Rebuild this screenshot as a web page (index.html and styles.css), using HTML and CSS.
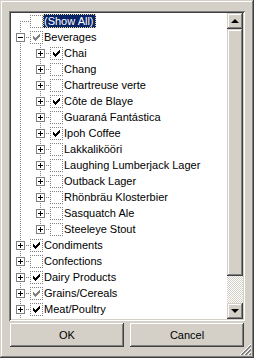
FILE: index.html
```html
<!DOCTYPE html>
<html lang="en">
<head>
<meta charset="UTF-8" />
<title>Filter</title>
<link rel="stylesheet" href="styles.css">
</head>
<body>

<div class="popup">
  <div class="tree-box">
    <div class="tree">
      <div class="row">
        <span class="cell first"></span>
        <span class="cb"></span>
        <span class="label selected">(Show All)</span>
      </div>
      <div class="row">
        <span class="cell tee"><span class="exp minus"></span></span>
        <span class="cb part"><svg viewBox="1 1 11 11"><path d="M9 3h1v1h-1zM8 4h2v1h-2zM3 5h1v1h-1zM7 5h3v1h-3zM3 6h2v1h-2zM6 6h3v1h-3zM3 7h5v1h-5zM4 8h3v1h-3zM5 9h1v1h-1z"/></svg></span>
        <span class="label">Beverages</span>
      </div>
      <div class="row">
        <span class="cell line"></span>
        <span class="cell tee"><span class="exp"></span></span>
        <span class="cb"><svg viewBox="1 1 11 11"><path d="M9 3h1v1h-1zM8 4h2v1h-2zM3 5h1v1h-1zM7 5h3v1h-3zM3 6h2v1h-2zM6 6h3v1h-3zM3 7h5v1h-5zM4 8h3v1h-3zM5 9h1v1h-1z"/></svg></span>
        <span class="label">Chai</span>
      </div>
      <div class="row">
        <span class="cell line"></span>
        <span class="cell tee"><span class="exp"></span></span>
        <span class="cb"></span>
        <span class="label">Chang</span>
      </div>
      <div class="row">
        <span class="cell line"></span>
        <span class="cell tee"><span class="exp"></span></span>
        <span class="cb"></span>
        <span class="label">Chartreuse verte</span>
      </div>
      <div class="row">
        <span class="cell line"></span>
        <span class="cell tee"><span class="exp"></span></span>
        <span class="cb"><svg viewBox="1 1 11 11"><path d="M9 3h1v1h-1zM8 4h2v1h-2zM3 5h1v1h-1zM7 5h3v1h-3zM3 6h2v1h-2zM6 6h3v1h-3zM3 7h5v1h-5zM4 8h3v1h-3zM5 9h1v1h-1z"/></svg></span>
        <span class="label">Côte de Blaye</span>
      </div>
      <div class="row">
        <span class="cell line"></span>
        <span class="cell tee"><span class="exp"></span></span>
        <span class="cb"></span>
        <span class="label">Guaraná Fantástica</span>
      </div>
      <div class="row">
        <span class="cell line"></span>
        <span class="cell tee"><span class="exp"></span></span>
        <span class="cb"><svg viewBox="1 1 11 11"><path d="M9 3h1v1h-1zM8 4h2v1h-2zM3 5h1v1h-1zM7 5h3v1h-3zM3 6h2v1h-2zM6 6h3v1h-3zM3 7h5v1h-5zM4 8h3v1h-3zM5 9h1v1h-1z"/></svg></span>
        <span class="label">Ipoh Coffee</span>
      </div>
      <div class="row">
        <span class="cell line"></span>
        <span class="cell tee"><span class="exp"></span></span>
        <span class="cb"></span>
        <span class="label">Lakkalikööri</span>
      </div>
      <div class="row">
        <span class="cell line"></span>
        <span class="cell tee"><span class="exp"></span></span>
        <span class="cb"></span>
        <span class="label">Laughing Lumberjack Lager</span>
      </div>
      <div class="row">
        <span class="cell line"></span>
        <span class="cell tee"><span class="exp"></span></span>
        <span class="cb"></span>
        <span class="label">Outback Lager</span>
      </div>
      <div class="row">
        <span class="cell line"></span>
        <span class="cell tee"><span class="exp"></span></span>
        <span class="cb"></span>
        <span class="label">Rhönbräu Klosterbier</span>
      </div>
      <div class="row">
        <span class="cell line"></span>
        <span class="cell tee"><span class="exp"></span></span>
        <span class="cb"></span>
        <span class="label">Sasquatch Ale</span>
      </div>
      <div class="row">
        <span class="cell line"></span>
        <span class="cell last"><span class="exp"></span></span>
        <span class="cb"></span>
        <span class="label">Steeleye Stout</span>
      </div>
      <div class="row">
        <span class="cell tee"><span class="exp"></span></span>
        <span class="cb"><svg viewBox="1 1 11 11"><path d="M9 3h1v1h-1zM8 4h2v1h-2zM3 5h1v1h-1zM7 5h3v1h-3zM3 6h2v1h-2zM6 6h3v1h-3zM3 7h5v1h-5zM4 8h3v1h-3zM5 9h1v1h-1z"/></svg></span>
        <span class="label">Condiments</span>
      </div>
      <div class="row">
        <span class="cell tee"><span class="exp"></span></span>
        <span class="cb"></span>
        <span class="label">Confections</span>
      </div>
      <div class="row">
        <span class="cell tee"><span class="exp"></span></span>
        <span class="cb"><svg viewBox="1 1 11 11"><path d="M9 3h1v1h-1zM8 4h2v1h-2zM3 5h1v1h-1zM7 5h3v1h-3zM3 6h2v1h-2zM6 6h3v1h-3zM3 7h5v1h-5zM4 8h3v1h-3zM5 9h1v1h-1z"/></svg></span>
        <span class="label">Dairy Products</span>
      </div>
      <div class="row">
        <span class="cell tee"><span class="exp"></span></span>
        <span class="cb part"><svg viewBox="1 1 11 11"><path d="M9 3h1v1h-1zM8 4h2v1h-2zM3 5h1v1h-1zM7 5h3v1h-3zM3 6h2v1h-2zM6 6h3v1h-3zM3 7h5v1h-5zM4 8h3v1h-3zM5 9h1v1h-1z"/></svg></span>
        <span class="label">Grains/Cereals</span>
      </div>
      <div class="row">
        <span class="cell tee"><span class="exp"></span></span>
        <span class="cb"><svg viewBox="1 1 11 11"><path d="M9 3h1v1h-1zM8 4h2v1h-2zM3 5h1v1h-1zM7 5h3v1h-3zM3 6h2v1h-2zM6 6h3v1h-3zM3 7h5v1h-5zM4 8h3v1h-3zM5 9h1v1h-1z"/></svg></span>
        <span class="label">Meat/Poultry</span>
      </div>
      <div class="row">
        <span class="cell line"></span>
      </div>
    </div>

    <div class="scrollbar">
      <div class="sb-btn"><span class="arrow up"></span></div>
      <div class="sb-track">
        <div class="sb-thumb"></div>
      </div>
      <div class="sb-btn"><span class="arrow down"></span></div>
    </div>
  </div>

  <div class="buttons">
    <button class="btn">OK</button>
    <button class="btn">Cancel</button>
  </div>

  <svg class="grip" width="12" height="12" viewBox="0 0 12 12">
    <path d="M11 0L0 11M11 4L4 11M11 8L8 11" stroke="#fff" stroke-width="1" shape-rendering="crispEdges"/>
    <path d="M11 1L1 11M11 2L2 11M11 5L5 11M11 6L6 11M11 9L9 11M11 10L10 11" stroke="#808080" stroke-width="1" shape-rendering="crispEdges"/>
  </svg>
</div>

</body>
</html>
```

FILE: styles.css
```css
body {
  margin: 0;
  background: #d4d0c8;
  font-family: 'Liberation Sans', Arial, sans-serif;
  font-size: 11px;
  color: #000;
}
.popup {
  position: relative;
  width: 254px;
  height: 358px;
  box-sizing: border-box;
  padding: 11px 9px 0 9px;
  background: #d4d0c8;
  box-shadow: inset -1px -1px #404040, inset 1px 1px #d4d0c8, inset -2px -2px #808080, inset 2px 2px #fff;
}
/* Tree */
.tree-box {
  display: flex;
  width: 236px;
  height: 310px;
  box-sizing: border-box;
  padding: 2px;
  background: #fff;
  box-shadow: inset 1px 1px #808080, inset -1px -1px #fff, inset 2px 2px #404040, inset -2px -2px #d4d0c8;
}
.tree {
  flex: 1;
  overflow: hidden;
  background: #fff;
}
.row {
  display: flex;
  align-items: flex-start;
  height: 16px;
  white-space: nowrap;
}
.cell {
  position: relative;
  flex: none;
  width: 20px;
  height: 16px;
}
.cell::before,
.cell::after {
  content: "";
  position: absolute;
}
/* vertical dotted line */
.cell.line::before,
.cell.tee::before,
.cell.first::before,
.cell.last::before {
  left: 9px;
  top: 0;
  width: 1px;
  height: 16px;
  background: repeating-linear-gradient(to bottom, #808080 0 1px, transparent 1px 2px);
}
.cell.first::before {
  top: 8px;
  height: 8px;
}
.cell.last::before {
  height: 9px;
}
/* horizontal dotted line */
.cell.tee::after,
.cell.first::after,
.cell.last::after {
  left: 9px;
  top: 8px;
  width: 11px;
  height: 1px;
  background: repeating-linear-gradient(to right, #808080 0 1px, transparent 1px 2px);
}
.exp {
  position: absolute;
  left: 5px;
  top: 4px;
  width: 9px;
  height: 9px;
  box-sizing: border-box;
  border: 1px solid #808080;
  background: #fff;
  z-index: 1;
}
.exp::before,
.exp::after {
  content: "";
  position: absolute;
  background: #000;
}
.exp::before {
  left: 1px;
  top: 3px;
  width: 5px;
  height: 1px;
}
.exp::after {
  left: 3px;
  top: 1px;
  width: 1px;
  height: 5px;
}
.exp.minus::after {
  display: none;
}
.cb {
  flex: none;
  width: 13px;
  height: 13px;
  box-sizing: border-box;
  margin: 2px 0 0 -1px;
  border: 1px dotted #808080;
  background: #fff;
}
.cb svg {
  display: block;
  width: 11px;
  height: 11px;
  fill: #000;
  shape-rendering: crispEdges;
}
.cb.part svg {
  fill: #808080;
}
.label {
  margin-top: 1px;
  padding: 0 2px 0 1px;
  line-height: 14px;
}
.label.selected {
  background: #0a246a;
  color: #fff;
  outline: 1px dotted #f0d890;
  outline-offset: -1px;
}
/* Scrollbar */
.scrollbar {
  display: flex;
  flex-direction: column;
  width: 16px;
  flex: none;
}
.sb-btn {
  display: flex;
  align-items: center;
  justify-content: center;
  height: 16px;
  flex: none;
  background: #d4d0c8;
  box-shadow: inset -1px -1px #404040, inset 1px 1px #d4d0c8, inset -2px -2px #808080, inset 2px 2px #fff;
}
.arrow {
  width: 0;
  height: 0;
  border-left: 4px solid transparent;
  border-right: 4px solid transparent;
}
.arrow.up {
  border-bottom: 4px solid #000;
  margin-top: -1px;
}
.arrow.down {
  border-top: 4px solid #000;
}
.sb-track {
  flex: 1;
  background-color: #d4d0c8;
  background-image: conic-gradient(#fff 25%, #d4d0c8 0 50%, #fff 0 75%, #d4d0c8 0);
  background-size: 2px 2px;
}
.sb-thumb {
  height: 247px;
  background: #d4d0c8;
  box-shadow: inset -1px -1px #404040, inset 1px 1px #d4d0c8, inset -2px -2px #808080, inset 2px 2px #fff;
}
/* Buttons */
.buttons {
  display: flex;
  gap: 6px;
  margin-top: 2px;
  padding-left: 1px;
}
.btn {
  width: 114px;
  height: 24px;
  padding: 0;
  border: none;
  background: #d4d0c8;
  font-family: 'Liberation Sans', Arial, sans-serif;
  font-size: 11px;
  color: #000;
  box-shadow: inset -1px -1px #404040, inset 1px 1px #fff, inset -2px -2px #808080, inset 2px 2px #d4d0c8;
}
.grip {
  position: absolute;
  right: 2px;
  bottom: 2px;
}
```
